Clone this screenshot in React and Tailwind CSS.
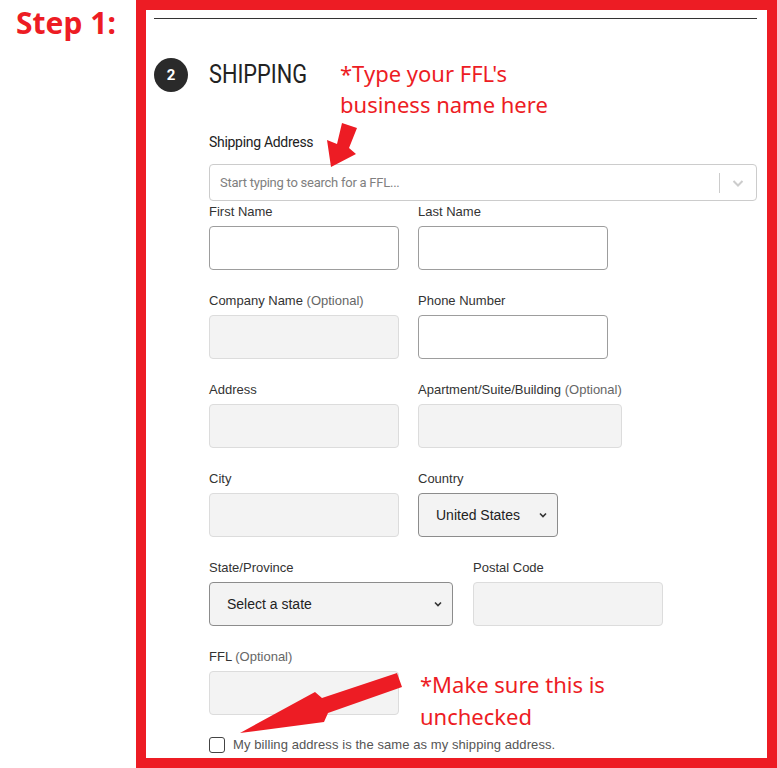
import React from 'react';

const RED = 'text-[#ed1c24]';

const Label = ({ text, optional }) => (
  <div className="h-[20px] mb-[4px] text-[13px] leading-[20px] text-[#333] whitespace-nowrap">
    {text}
    {optional && <span className="text-[#666]"> (Optional)</span>}
  </div>
);

const Field = ({ label, optional, children }) => (
  <div className="flex flex-col">
    <Label text={label} optional={optional} />
    {children}
  </div>
);

const WhiteInput = () => (
  <input readOnly className="block h-[44px] w-[190px] rounded-[4px] border border-[#9d9d9d] bg-white outline-none" />
);

const GrayInput = ({ w = 'w-[190px]' }) => (
  <input readOnly className={`block h-[44px] ${w} rounded-[4px] border border-[#dcdcdc] bg-[#f3f3f3] outline-none`} />
);

const SelectBox = ({ value, w }) => (
  <div className={`flex h-[44px] ${w} items-center justify-between rounded-[4px] border border-[#8c8c8c] bg-[#f3f3f3] pl-[17px] pr-[9px] text-[14px] text-[#222]`}>
    <span>{value}</span>
    <svg width="10" height="10" viewBox="0 0 10 10">
      <path d="M2 3.5 L5 6.5 L8 3.5" fill="none" stroke="#333" strokeWidth="1.6" />
    </svg>
  </div>
);

export default function App() {
  return (
    <div className="relative flex h-[768px] w-[777px] overflow-hidden bg-white font-['Liberation_Sans',Arial,sans-serif]">
      {/* left label */}
      <div className="w-[136px] shrink-0 pl-[16px] pt-[5px]">
        <div className={`font-['Noto_Sans',sans-serif] text-[30px] font-bold leading-[36px] ${RED}`}>Step 1:</div>
      </div>

      {/* framed checkout section */}
      <div className="h-[768px] flex-1 border-[10px] border-[#ed1c24]">
        <div className="mt-[8px] ml-[8px] mr-[10px] h-px bg-[#333]" />

        <div className="ml-[8px] mt-[39px] flex items-center gap-[21px]">
          <div className="flex h-[34px] w-[34px] items-center justify-center rounded-full bg-[#2a2a2a] font-['Roboto',sans-serif] text-[15px] font-bold text-white">
            2
          </div>
          <div className="origin-left scale-x-[0.87] font-['Roboto',sans-serif] text-[25px] leading-[30px] text-[#222]">
            SHIPPING
          </div>
        </div>

        <div className="ml-[63px] mr-[10px]">
          <div className="mt-[40px] mb-[12px] h-[20px] font-['Roboto',sans-serif] text-[14px] leading-[20px] tracking-[-0.3px] text-[#222]">
            Shipping Address
          </div>
          <div className="flex h-[37px] items-center rounded-[4px] border border-[#cccccc] bg-white">
            <div className="flex-1 pl-[10px] font-['Roboto',sans-serif] text-[13px] tracking-[-0.25px] text-[#808080]">
              Start typing to search for a FFL...
            </div>
            <div className="h-[20px] w-px bg-[#cccccc]" />
            <div className="flex w-[36px] justify-center">
              <svg width="14" height="10" viewBox="0 0 14 10">
                <path d="M2.5 3 L7 7.5 L11.5 3" fill="none" stroke="#cccccc" strokeWidth="2" />
              </svg>
            </div>
          </div>

          <div className="mt-px flex flex-col gap-[21px]">
            <div className="flex gap-[19px]">
              <Field label="First Name"><WhiteInput /></Field>
              <Field label="Last Name"><WhiteInput /></Field>
            </div>
            <div className="flex gap-[19px]">
              <Field label="Company Name" optional><GrayInput /></Field>
              <Field label="Phone Number"><WhiteInput /></Field>
            </div>
            <div className="flex gap-[19px]">
              <Field label="Address"><GrayInput /></Field>
              <Field label="Apartment/Suite/Building" optional><GrayInput w="w-[204px]" /></Field>
            </div>
            <div className="flex gap-[19px]">
              <Field label="City"><GrayInput /></Field>
              <Field label="Country"><SelectBox value="United States" w="w-[140px]" /></Field>
            </div>
            <div className="flex gap-[20px]">
              <Field label="State/Province"><SelectBox value="Select a state" w="w-[244px]" /></Field>
              <Field label="Postal Code"><GrayInput /></Field>
            </div>
            <div className="flex">
              <Field label="FFL" optional><GrayInput /></Field>
            </div>
          </div>

          <div className="mt-[22px] flex items-center gap-[8px]">
            <div className="h-[16px] w-[16px] rounded-[3px] border-[1.5px] border-[#444] bg-white" />
            <span className="text-[13px] leading-[16px] tracking-[0.08px] text-[#555]">My billing address is the same as my shipping address.</span>
          </div>
        </div>
      </div>

      {/* annotations drawn over the screenshot */}
      <div className={`absolute left-[340px] top-[58px] font-['Noto_Sans',sans-serif] text-[22px] leading-[31px] ${RED}`}>
        *Type your FFL's
        <br />
        business name here
      </div>
      <div className={`absolute left-[420px] top-[668px] font-['Noto_Sans',sans-serif] text-[22px] leading-[32px] ${RED}`}>
        *Make sure this is
        <br />
        unchecked
      </div>
      <svg className="absolute left-0 top-0" width="777" height="768" viewBox="0 0 777 768">
        <polygon points="342,123 357,128 349,148 356,154 331,167 327,140 337,144" fill="#ed1c24" />
        <polygon points="397,673 402,687 328,713 324,722 240,733 315,692 322,698" fill="#ed1c24" />
      </svg>
    </div>
  );
}
